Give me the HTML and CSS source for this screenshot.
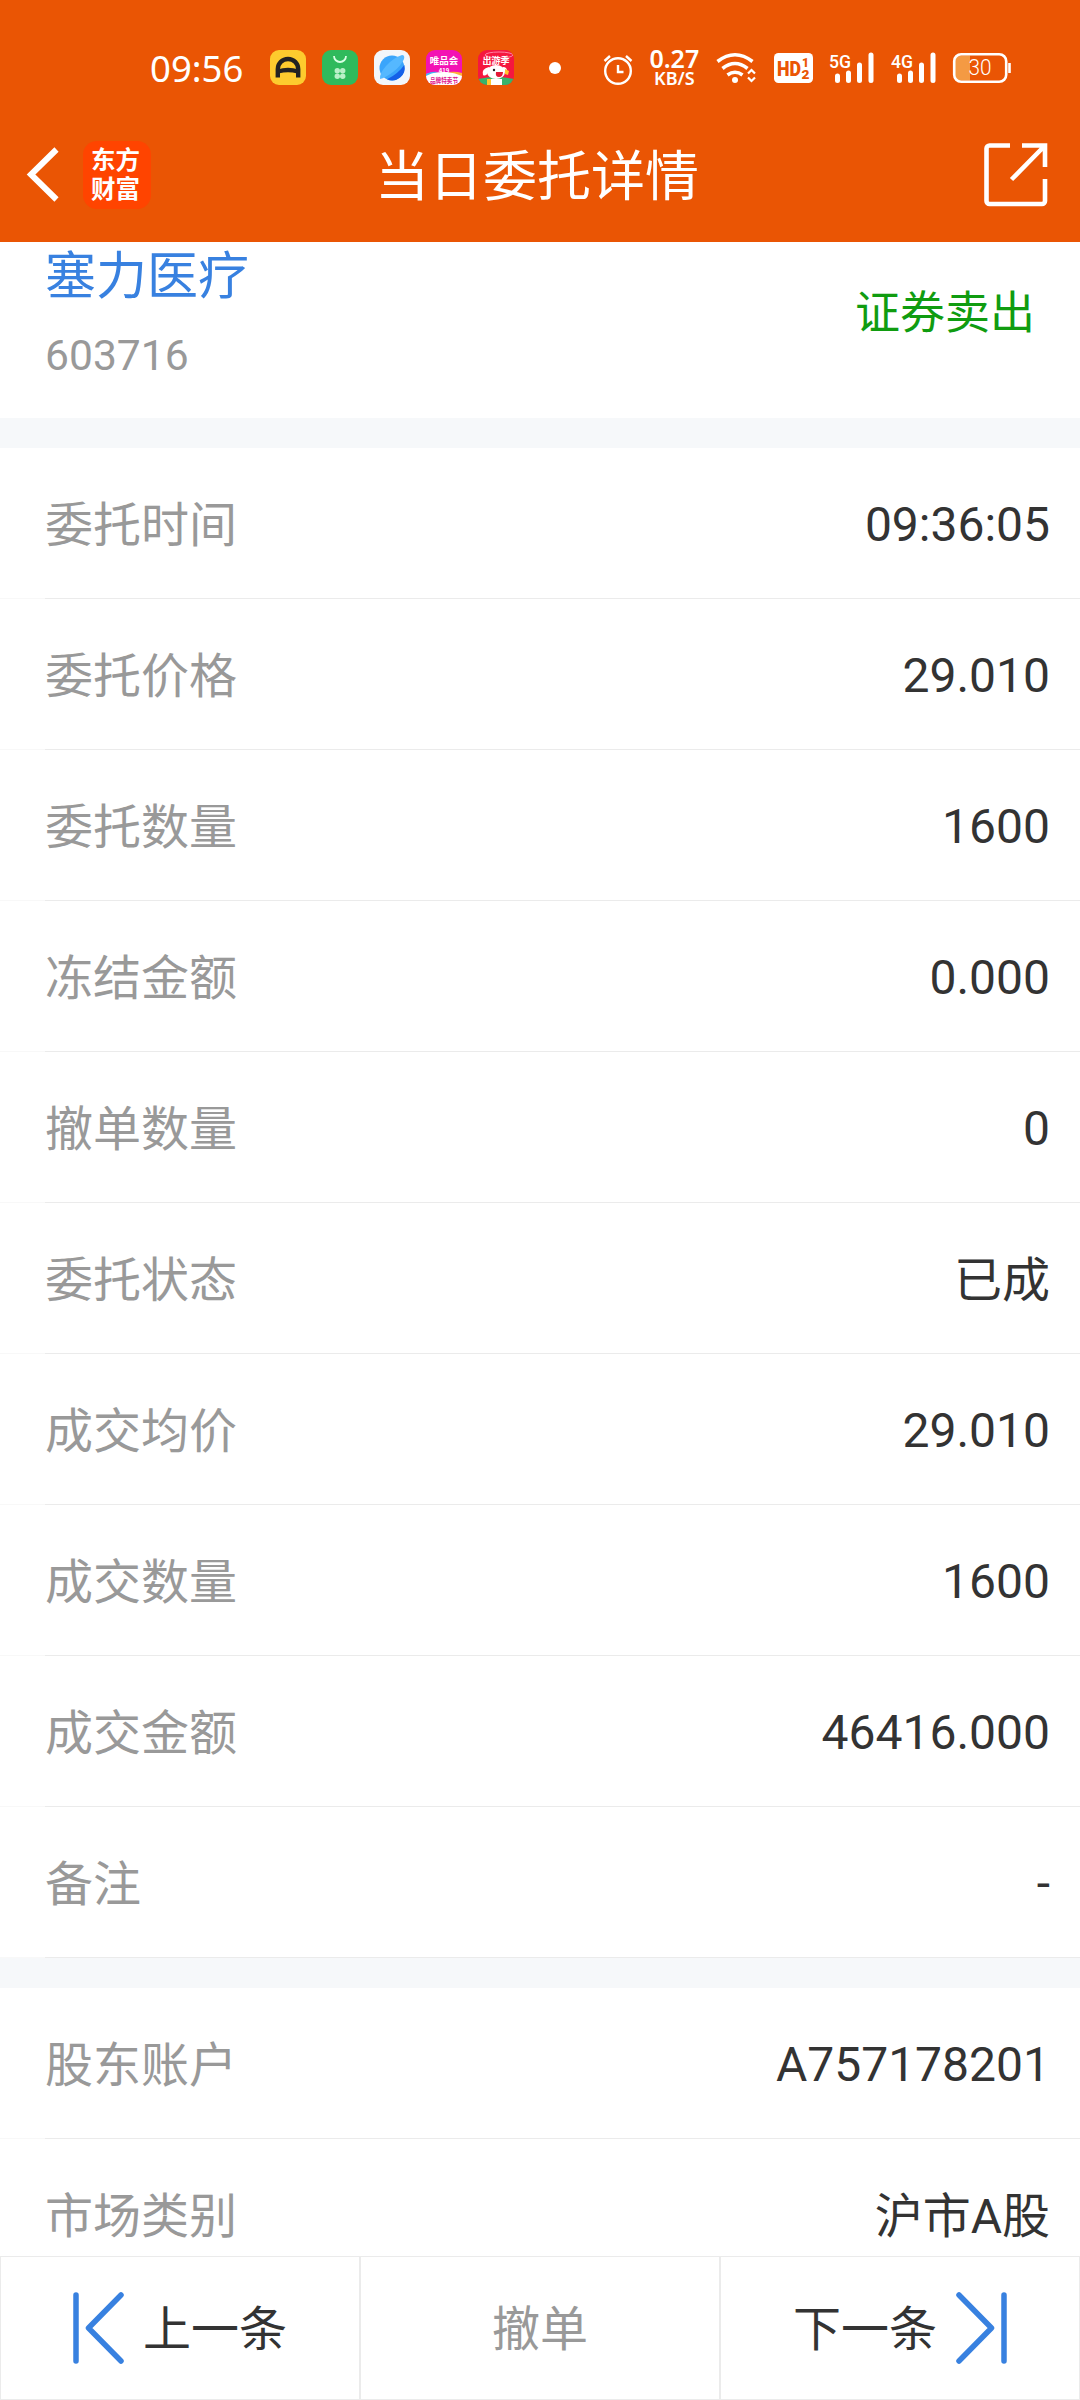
FILE: index.html
```html
<!DOCTYPE html>
<html lang="zh-CN">
<head>
<meta charset="utf-8">
<title>当日委托详情</title>
<link rel="stylesheet" href="styles.css">
</head>
<body>
<div class="screen">
  <header class="header">
    <div class="status">
      <span class="clock">09:56</span>
      <div class="apps">
        <svg width="36" height="36" viewBox="0 0 36 36"><rect width="36" height="35" rx="9" fill="#fdcb2e"/><path d="M7.800 27.500V19a10.200 10 0 0 1 20.400 0v8.500M8 21.500q10-3 20 0" fill="none" stroke="#222" stroke-width="4.400"/></svg>
        <svg width="36" height="36" viewBox="0 0 36 36"><rect width="36" height="35" rx="9" fill="#2fba5c"/><path d="M12 6a6 6 0 0 0 12 0" fill="none" stroke="#d9ffe4" stroke-width="1.800"/><g fill="#b9f0c8"><circle cx="15.300" cy="20.800" r="2.700"/><circle cx="20.700" cy="20.800" r="2.700"/><circle cx="15.300" cy="26.200" r="2.700"/><circle cx="20.700" cy="26.200" r="2.700"/></g></svg>
        <svg width="36" height="36" viewBox="0 0 36 36"><rect width="36" height="35" rx="9" fill="#f3f6fa"/><circle cx="18" cy="18" r="12.500" fill="#3aa5fb"/><path d="M30.300 15A12.500 12.500 0 0 1 13 29.300Q24 24 30.300 15Z" fill="#1560e8"/><path d="M6 29Q5 24 12 16T28 5q3 0 2 4-3 7-11 13T6 29Z" fill="#55b8ff"/></svg>
        <svg width="36" height="36" viewBox="0 0 36 36"><defs><clipPath id="tile"><rect width="36" height="35" rx="9"/></clipPath></defs><g clip-path="url(#tile)"><rect width="36" height="36" fill="#f312b4"/><path d="M0 24q18-4 36 0v12H0Z" fill="#fff"/><path d="M22 22q8-1 14 1v3q-7-3-14-4Z" fill="#ffb03b"/><path d="M0 24q6-3 12-2-7 1-12 4Z" fill="#3db7f5"/><text x="18" y="14" class="tile-text" font-size="9.500" fill="#fff">唯品会</text><text x="18" y="22.500" class="tile-text" font-size="6" fill="#fff">419</text><text x="18" y="33" class="tile-text" font-size="7" textLength="28" lengthAdjust="spacingAndGlyphs" fill="#e0148e">品牌特卖节</text></g></svg>
        <svg width="36" height="36" viewBox="0 0 36 36"><g clip-path="url(#tile)"><rect width="36" height="36" fill="#f5173f"/><path d="M0 29q18-4 36 0v7H0Z" fill="#38b36b"/><ellipse cx="21" cy="5" rx="14" ry="3" fill="none" stroke="#ff80a3"/><path d="M12 36v-7h12v7Z" fill="#fff"/><ellipse cx="18" cy="22" rx="9" ry="7" fill="#fff"/><path d="M11 17q-8 2-6 8 3 2 6-4ZM25 17q4 0 4 4l-4 1Z" fill="#fff"/><circle cx="16" cy="20" r="1.200" fill="#222"/><path d="M18 22h7q0 5-4 5t-3-5Z" fill="#e31836"/><path d="M9 29h4v7H9ZM27 19l4 2-1 4-3-1Z" fill="#ffc52e"/><text x="18" y="14" class="tile-text" font-size="9" fill="#fff">出游季</text></g></svg>
      </div>
      <svg class="dot" width="12" height="40" viewBox="0 0 12 40"><circle cx="6" cy="20" r="6" fill="#fff"/></svg>
      <div class="indicators">
        <svg width="30" height="40" viewBox="603 48 30 40" fill="none" stroke="#fff" stroke-width="2.400"><circle cx="618" cy="71" r="12.800"/><path d="M618 65v7h5.500M604.500 61l5.500-5M631.500 61l-5.500-5"/></svg>
        <div class="speed"><span class="speed-value">0.27</span><span class="speed-unit">KB/S</span></div>
        <svg width="42" height="40" viewBox="716 48 42 40" fill="none" stroke="#fff"><g stroke-width="3.600"><path d="M717.500 61.500q17.500-13.500 35 0M722.500 68.500q12.500-10 25 0M727.500 75q7.500-5.500 15 0"/></g><circle cx="735" cy="80" r="3" fill="#fff" stroke="none"/><path d="M748 73.500l3.500-3.500 3.500 3.500M748 77.500l3.500 3.500 3.500-3.500" stroke-width="2.200"/></svg>
        <svg class="hd" width="39" height="40" viewBox="772 48 39 40"><rect x="772" y="53" width="39" height="30" rx="4.500" fill="#fff"/><text x="775" y="76" font-size="21" textLength="24" lengthAdjust="spacingAndGlyphs">HD</text><text x="800" y="67" font-size="13" textLength="7" lengthAdjust="spacingAndGlyphs">1</text><text x="799.500" y="78.500" font-size="13" textLength="8" lengthAdjust="spacingAndGlyphs">2</text></svg>
        <svg class="signal" width="45" height="40" viewBox="829 48 45 40"><text x="829" y="67.500" textLength="22" lengthAdjust="spacingAndGlyphs">5G</text><path d="M837.500 76v4.500M848.500 73v7.500M859.500 65v15.500M871 55v25.500"/></svg>
        <svg class="signal" width="45" height="40" viewBox="891 48 45 40"><text x="891" y="67.500" textLength="22" lengthAdjust="spacingAndGlyphs">4G</text><path d="M899.500 76v4.500M910.500 73v7.500M921.500 65v15.500M933 55v25.500"/></svg>
        <svg class="battery" width="60" height="40" viewBox="952 48 60 40"><path d="M970 55.500h-9a6 6 0 0 0-6 6v13a6 6 0 0 0 6 6h9Z" fill="#f49a43"/><rect x="954.200" y="54.200" width="52" height="27.600" rx="7" fill="none" stroke="#fff" stroke-width="2.600"/><path d="M1009.500 63v10" stroke="#fff" stroke-width="2.600"/><text x="968.500" y="75" textLength="23" lengthAdjust="spacingAndGlyphs">30</text></svg>
      </div>
    </div>
    <nav class="navbar">
      <div class="nav-left">
        <svg width="34" height="58" viewBox="26 146 34 58"><path d="M56.500 149.500L31 174.500l25.500 25" fill="none" stroke="#fff" stroke-width="6"/></svg>
        <div class="logo"><span>东方</span><span>财富</span></div>
      </div>
      <h1 class="title">当日委托详情</h1>
      <div class="nav-right">
        <svg width="64" height="64" viewBox="0 0 64 64" fill="none" stroke="#fff" stroke-width="4.600"><path d="M26 2.500H5.500a3 3 0 0 0-3 3V58a3 3 0 0 0 3 3H58a3 3 0 0 0 3-3V36M38 2.500h23v21.500M61 2.500L27.500 36.500"/></svg>
      </div>
    </nav>
  </header>

  <main class="content">
    <section class="stock">
      <div class="stock-id"><span class="stock-name">塞力医疗</span><span class="stock-code">603716</span></div>
      <span class="side">证券卖出</span>
    </section>
    <dl class="group">
      <div class="row"><dt>委托时间</dt><dd>09:36:05</dd></div>
      <div class="row"><dt>委托价格</dt><dd>29.010</dd></div>
      <div class="row"><dt>委托数量</dt><dd>1600</dd></div>
      <div class="row"><dt>冻结金额</dt><dd>0.000</dd></div>
      <div class="row"><dt>撤单数量</dt><dd>0</dd></div>
      <div class="row"><dt>委托状态</dt><dd class="words">已成</dd></div>
      <div class="row"><dt>成交均价</dt><dd>29.010</dd></div>
      <div class="row"><dt>成交数量</dt><dd>1600</dd></div>
      <div class="row"><dt>成交金额</dt><dd>46416.000</dd></div>
      <div class="row"><dt>备注</dt><dd>-</dd></div>
    </dl>
    <dl class="group">
      <div class="row"><dt>股东账户</dt><dd>A757178201</dd></div>
      <div class="row"><dt>市场类别</dt><dd class="words">沪市A股</dd></div>
    </dl>
  </main>

  <footer class="actions">
    <button class="action">
      <svg width="52" height="72" viewBox="0 0 52 72"><path d="M3 3v66M48 3L15.500 36 48 69"/></svg>
      <span>上一条</span>
    </button>
    <button class="action muted"><span>撤单</span></button>
    <button class="action">
      <span>下一条</span>
      <svg width="52" height="72" viewBox="0 0 52 72"><path d="M49 3v66M4 3l32.500 33L4 69"/></svg>
    </button>
  </footer>
</div>
</body>
</html>
```
FILE: styles.css
```css
* { box-sizing: border-box; }

body {
  margin: 0;
  background: #fff;
  font-family: Roboto, "Noto Sans CJK SC", sans-serif;
  color: #333;
}

.screen {
  display: flex;
  flex-direction: column;
  width: 1080px;
  height: 2400px;
  overflow: hidden;
}

svg { display: block; flex: none; }

/* Header */
.header { flex: none; height: 242px; background: #ea5504; color: #fff; }

.status {
  display: flex;
  align-items: center;
  height: 108px;
  padding: 28px 68px 0 150px;
}

.clock {
  width: 120px;
  font: 36.500px/40px "Noto Sans", sans-serif;
}

.apps { display: flex; gap: 16px; }
.tile-text { font-family: "Noto Sans CJK SC", sans-serif; font-weight: 700; text-anchor: middle; }
.dot { margin-left: 35px; }

.indicators { display: flex; flex: 1; justify-content: space-between; align-items: center; margin-left: 42px; }

.speed {
  display: flex;
  flex-direction: column;
  align-items: center;
  width: 50px;
  font-family: "Noto Sans", sans-serif;
  font-weight: 600;
}
.speed-value { font-size: 25px; line-height: 21px; }
.speed-unit { font-size: 18px; line-height: 19px; }

.hd text { font-family: Roboto, sans-serif; font-weight: 900; fill: #ea5504; }
.signal text { font: 500 19px Roboto, sans-serif; fill: #fff; }
.signal path { stroke: #fff; stroke-width: 5; stroke-linecap: round; }
.battery text { font: 300 22px Roboto, sans-serif; fill: #fff; }

.navbar {
  display: grid;
  grid-template-columns: 1fr auto 1fr;
  align-items: center;
  height: 134px;
  padding: 0 32px 0 26px;
}
.nav-left { display: flex; align-items: center; gap: 23px; }
.nav-right { display: flex; justify-content: flex-end; }

.logo {
  display: flex;
  flex-direction: column;
  align-items: center;
  width: 68px;
  height: 68px;
  padding: 3px 3px 0 0;
  border-radius: 14px;
  background: #ff4400;
  font: 700 24.500px/29px "Noto Sans CJK SC", sans-serif;
}

.title { margin: 0; padding-top: 6px; font-size: 54px; font-weight: 400; line-height: 64px; }

/* Details */
.content { flex: 1; min-height: 0; overflow: hidden; }

.stock {
  display: flex;
  justify-content: space-between;
  height: 176px;
  padding: 1px 45px 0;
}
.stock-id { display: flex; flex-direction: column; }
.stock-name { font-size: 51px; line-height: 68px; color: #3881e0; }
.stock-code { margin-top: 19px; font-size: 42.600px; line-height: 50px; color: #999; }
.side { margin-top: 37px; font-size: 45px; line-height: 68px; color: #109c10; }

.group { margin: 0; border-top: 30px solid #f6f8fa; }

.row {
  display: flex;
  align-items: center;
  justify-content: space-between;
  height: 151px;
  padding: 0 30px 0 45px;
  background: linear-gradient(90deg, #f8f8f8 45px, #ebebeb 45px) bottom / 100% 1px no-repeat;
  font-size: 48px;
  line-height: 60px;
}
dt { padding-top: 4px; color: #999; }
dd { margin: 0; padding-top: 2px; }
.words { padding-top: 4px; }

/* Bottom actions */
.actions { display: grid; grid-template-columns: repeat(3, 1fr); flex: none; height: 144px; }

.action {
  display: flex;
  align-items: center;
  justify-content: center;
  gap: 18px;
  padding: 0;
  border: 1px solid #ebebeb;
  background: #fff;
  color: #333;
  font: inherit;
  font-size: 48px;
  line-height: 60px;
}
.action span { padding-top: 4px; }
.action path { fill: none; stroke: #3881e0; stroke-width: 5.500; stroke-linecap: round; stroke-linejoin: round; }
.muted { color: #999; }
```
